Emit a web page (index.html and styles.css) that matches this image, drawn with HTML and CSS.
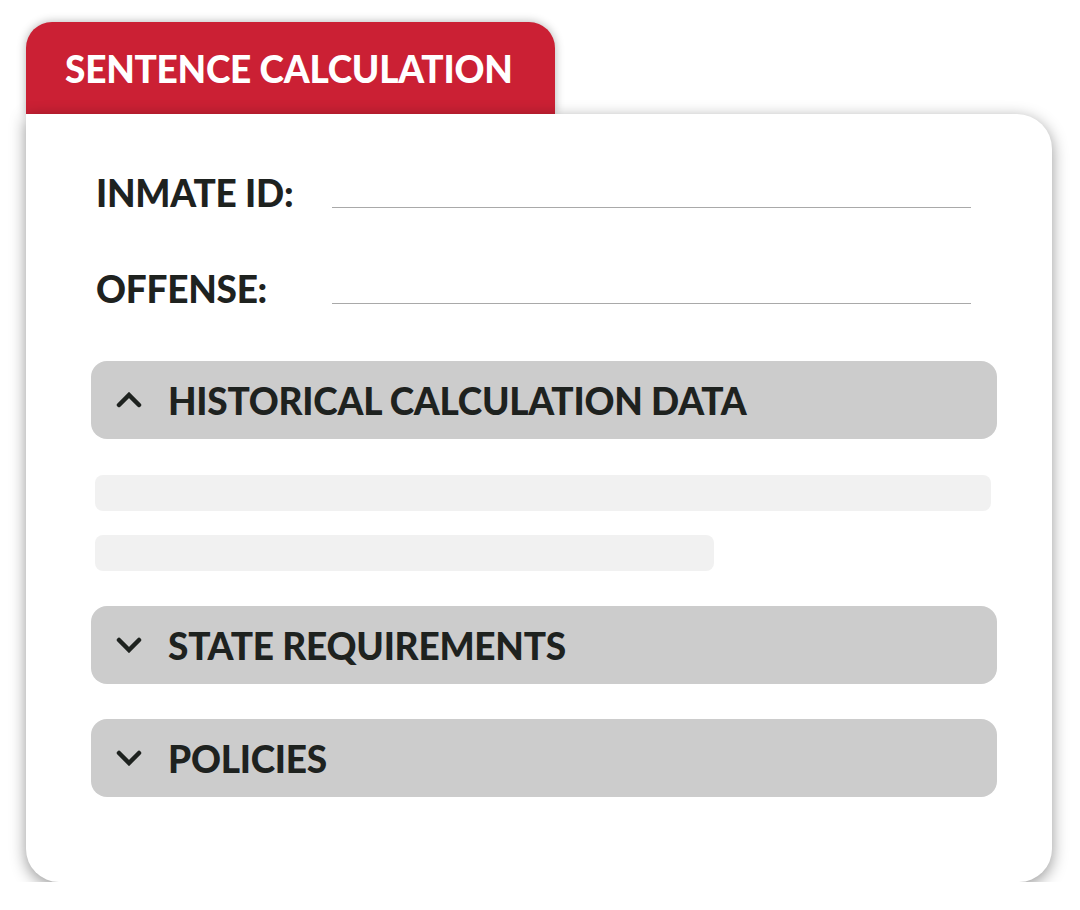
FILE: index.html
```html
<!DOCTYPE html>
<html lang="en">
<head>
    <meta charset="UTF-8">
    <meta name="viewport" content="width=device-width, initial-scale=1.0">
    <title>Sentence Calculation</title>
    <link rel="stylesheet" href="styles.css">
</head>
<body>
    <div class="panel">
        <!-- tab title -->
        <div class="tab">SENTENCE CALCULATION</div>

        <div class="card">
            <!-- form fields -->
            <div class="fields">
                <div class="field">
                    <span class="label">INMATE ID:</span>
                    <span class="line"></span>
                </div>
                <div class="field">
                    <span class="label">OFFENSE:</span>
                    <span class="line"></span>
                </div>
            </div>

            <!-- accordion sections -->
            <div class="section open">
                <div class="section-head">
                    <svg class="chevron" viewBox="0 0 26 16"><polyline points="3,13 13,3 23,13"/></svg>
                    <span>HISTORICAL CALCULATION DATA</span>
                </div>
                <div class="section-body">
                    <div class="skeleton"></div>
                    <div class="skeleton" style="width: 619px"></div>
                </div>
            </div>

            <div class="section">
                <div class="section-head">
                    <svg class="chevron" viewBox="0 0 26 16"><polyline points="3,3 13,13 23,3"/></svg>
                    <span>STATE REQUIREMENTS</span>
                </div>
            </div>

            <div class="section">
                <div class="section-head">
                    <svg class="chevron" viewBox="0 0 26 16"><polyline points="3,3 13,13 23,3"/></svg>
                    <span>POLICIES</span>
                </div>
            </div>
        </div>
    </div>
</body>
</html>
```

FILE: styles.css
```css
body {
    margin: 0;
    padding: 0;
    background: #ffffff;
    font-family: 'Lato', 'Open Sans', sans-serif;
    color: #1e221f;
}

.panel {
    padding: 22px 0 0 26px;
    width: 1026px;
}

.tab {
    display: inline-block;
    position: relative;
    height: 92px;
    line-height: 94px;
    padding: 0 42px 0 39px;
    background: #cb2034;
    color: #ffffff;
    font-size: 37px;
    font-weight: 900;
    letter-spacing: -0.25px;
    border-radius: 26px 26px 0 0;
    box-shadow: 0 0 10px rgba(0, 0, 0, 0.3);
}

.card {
    position: relative;
    z-index: 1;
    height: 768px;
    box-sizing: border-box;
    padding: 59px 55px 0 65px;
    background: #ffffff;
    border-radius: 0 35px 33px 33px;
    box-shadow: 0 4px 16px rgba(0, 0, 0, 0.42);
}

.fields {
    display: flex;
    flex-direction: column;
    gap: 56px;
    padding: 0 26px 0 5px;
}

.field {
    display: flex;
    align-items: flex-end;
    height: 40px;
}

.label {
    width: 236px;
    font-size: 37px;
    font-weight: 900;
    letter-spacing: -0.25px;
    line-height: 40px;
}

.line {
    flex: 1;
    margin-bottom: 5px;
    border-bottom: 1px solid #a9a9a9;
}

.section {
    margin-top: 35px;
}

.section.open {
    margin-top: 52px;
}

.section-head {
    display: flex;
    align-items: center;
    gap: 26px;
    height: 78px;
    padding-left: 25px;
    background: #cccccc;
    border-radius: 16px;
    font-size: 37px;
    font-weight: 900;
    letter-spacing: -0.25px;
}

.chevron {
    width: 26px;
    height: 16px;
    fill: none;
    stroke: #1e221f;
    stroke-width: 4.5;
    stroke-linecap: round;
}

.section-body {
    display: flex;
    flex-direction: column;
    gap: 24px;
    padding: 36px 0 0 4px;
}

.skeleton {
    width: 896px;
    height: 36px;
    background: #f1f1f1;
    border-radius: 8px;
}
```
